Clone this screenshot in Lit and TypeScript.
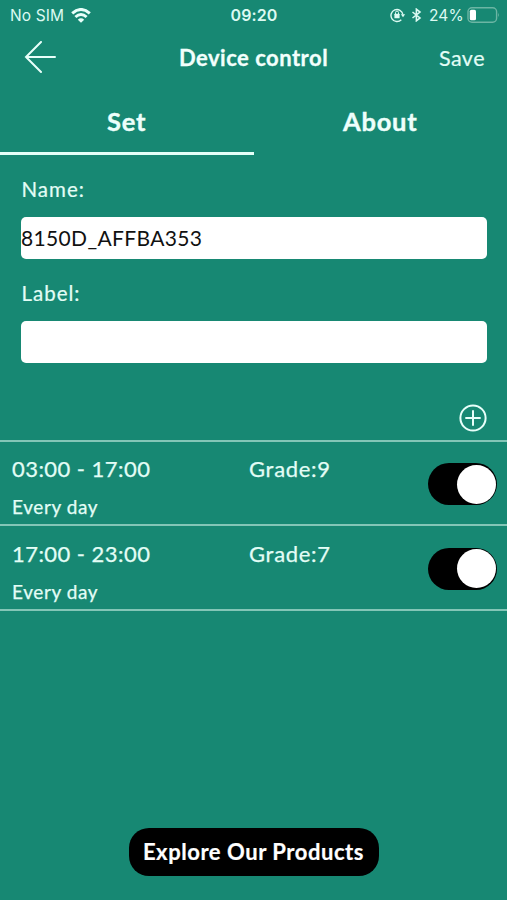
import { LitElement, html, css } from "lit";
import { customElement, property, state } from "lit/decorators.js";
import { classMap } from "lit/directives/class-map.js";

@customElement("status-bar")
class StatusBar extends LitElement {
  static styles = css`
    :host { display: flex; height: 30px; align-items: center; position: relative; padding: 0 7px 0 10px; font: 500 15.5px/30px Inter, sans-serif; color: #dcfaf2; box-sizing: border-box; }
    .sim { letter-spacing: 0.1px; font-weight: 400; width: 61px; white-space: nowrap; padding-top: 1px; }
    .time { position: absolute; left: 0; right: 0; text-align: center; font-weight: 600; font-size: 16px; letter-spacing: 0.1px; padding-left: 1px; }
    .right { margin-left: auto; display: flex; align-items: center; }
    .lock { margin-right: 5px; }
    .bt { margin-right: 7px; }
    .pct { letter-spacing: 0.15px; width: 38px; font-weight: 400; white-space: nowrap; padding-top: 1px; }
    svg { display: block; }
  `;
  render() {
    return html`
      <span class="sim">No SIM</span>
      <svg width="20" height="15" viewBox="0 0 20 15" fill="none" stroke="#e8fffa" stroke-width="3">
        <path d="M1.2 5.4 Q10-2.4 18.8 5.4M4.4 9 Q10 4 15.6 9" />
        <path d="M10 14.8 6.8 11.7Q10 9 13.2 11.7Z" fill="#e8fffa" stroke="none" />
      </svg>
      <span class="time">09:20</span>
      <div class="right">
        <svg class="lock" width="16" height="16" viewBox="0 0 16 16" fill="none" stroke="#dcfaf2" stroke-width="1.4">
          <path d="M11.3 12.7A6 6 0 1 1 12.9 7.5" />
          <path d="M10.8 7.2h4.4L13 10.2Z" fill="#dcfaf2" stroke="none" />
          <rect x="4.4" y="6.8" width="5.2" height="4.4" rx=".5" fill="#dcfaf2" stroke="none" />
          <path d="M5.5 7V5.6a1.5 1.5 0 0 1 3 0V7" stroke-width="1" />
        </svg>
        <svg class="bt" width="11" height="14" viewBox="0 0 11 14" fill="none" stroke="#dcfaf2" stroke-width="1.6">
          <path d="M1.5 4 9 10 5.4 12.8V1.2L9 4 1.5 10" />
        </svg>
        <span class="pct">24%</span>
        <svg width="33" height="16" viewBox="0 0 33 16">
          <rect x="1" y=".8" width="28.6" height="14.4" rx="4" fill="none" stroke="#6cb5a4" stroke-width="1.4" />
          <rect x="2.8" y="2.7" width="6.2" height="10.6" rx="1.6" fill="#fff" />
          <path d="M31 5.7q1.8 2.3 0 4.6Z" fill="#6cb5a4" />
        </svg>
      </div>
    `;
  }
}

@customElement("schedule-row")
class ScheduleRow extends LitElement {
  @property() time = "";
  @property() grade = "";
  @property({ type: Boolean }) on = true;
  static styles = css`
    :host { display: grid; grid-template-columns: 237px 1fr 69px; grid-template-rows: 44px 28.5px; height: 84.5px; box-sizing: border-box; padding: 5.5px 10px 4px 12px; border-bottom: 2px solid #83c6b7; color: #e3fdf6; -webkit-text-stroke: 0.25px #e3fdf6; }
    .time, .grade { font-size: 22px; line-height: 44px; white-space: nowrap; letter-spacing: 0.45px; }
    .grade { letter-spacing: 0.7px; }
    .repeat { font-size: 19px; line-height: 31px; letter-spacing: 0.6px; }
    .switch { grid-column: 3; grid-row: 1 / 3; align-self: center; width: 69px; height: 42px; border-radius: 21px; background: #000; border: 0; padding: 1.5px; display: flex; justify-content: flex-end; box-sizing: border-box; margin-top: 1.5px; }
    .switch.off { justify-content: flex-start; background: #555; }
    .knob { width: 39px; height: 39px; border-radius: 50%; background: #fff; }
  `;
  render() {
    return html`
      <span class="time">${this.time}</span>
      <span class="grade">Grade:${this.grade}</span>
      <button class=${classMap({ switch: true, off: !this.on })} @click=${() => (this.on = !this.on)}><span class="knob"></span></button>
      <span class="repeat">Every day</span>
    `;
  }
}

@customElement("app-root")
class AppRoot extends LitElement {
  @state() private tab = 0;
  static styles = css`
    :host { display: flex; flex-direction: column; width: 100%; height: 900px; background: #178873; font-family: Lato, sans-serif; color: #e3fdf6; overflow: hidden; }
    nav { display: grid; grid-template-columns: 150px 1fr 150px; align-items: center; height: 56px; }
    .back { margin-left: 24px; display: block; }
    .title { text-align: center; font-weight: 700; font-size: 22px; line-height: 56px; letter-spacing: 0.5px; color: #f2fffc; -webkit-text-stroke: 0.3px #f2fffc; }
    .save { text-align: right; font-size: 21.5px; line-height: 56px; letter-spacing: 0.5px; padding-right: 22px; -webkit-text-stroke: 0.2px #e3fdf6; }
    .tabs { display: grid; grid-template-columns: 1fr 1fr; height: 69px; }
    .tab { text-align: center; font-size: 25.5px; font-weight: 700; line-height: 70px; letter-spacing: 0.8px; color: #edfffb; -webkit-text-stroke: 0.4px #edfffb; border-bottom: 3px solid transparent; box-sizing: border-box; height: 69px; }
    .tab.active { border-color: #e5fff8; }
    form { padding: 17.5px 20.5px 0 21px; display: flex; flex-direction: column; }
    label { font-size: 20.5px; line-height: 32px; height: 44.5px; letter-spacing: 1px; padding-left: 0.5px; box-sizing: border-box; -webkit-text-stroke: 0.2px #e3fdf6; }
    .field { height: 42px; border-radius: 5px; background: #fff; color: #111; font-size: 21px; line-height: 41px; letter-spacing: 0.35px; margin-bottom: 17.5px; white-space: nowrap; }
    .add { display: flex; justify-content: flex-end; padding: 22px 19px 7px 0; height: 61px; box-sizing: border-box; border-bottom: 2px solid #83c6b7; }
    .explore { margin: auto auto 24px; width: 250px; height: 48px; border-radius: 20px; border: 0; padding: 0; background: #000; color: #fff; font: 700 22px/48px Lato, sans-serif; letter-spacing: 0.55px; -webkit-text-stroke: 0.2px #fff; white-space: nowrap; }
  `;
  render() {
    return html`
      <status-bar></status-bar>
      <nav>
        <svg class="back" width="34" height="34" viewBox="0 0 34 34" fill="none" stroke="#e8fffa" stroke-width="2" stroke-linecap="round">
          <path d="M31 16H2M17 1 2 16 17 31" />
        </svg>
        <span class="title">Device control</span>
        <span class="save">Save</span>
      </nav>
      <div class="tabs">
        ${["Set", "About"].map((t, i) => html`<div class=${classMap({ tab: true, active: this.tab === i })} @click=${() => (this.tab = i)}>${t}</div>`)}
      </div>
      <form>
        <label>Name:</label>
        <div class="field">8150D_AFFBA353</div>
        <label>Label:</label>
        <div class="field"></div>
      </form>
      <div class="add">
        <svg width="30" height="30" viewBox="0 0 30 30" fill="none" stroke="#e8fffa" stroke-width="2">
          <circle cx="15" cy="15" r="12.6" />
          <path d="M7.3 15h15.4M15 7.3v15.4" />
        </svg>
      </div>
      <schedule-row time="03:00 - 17:00" grade="9"></schedule-row>
      <schedule-row time="17:00 - 23:00" grade="7"></schedule-row>
      <button class="explore">Explore Our Products</button>
    `;
  }
}
